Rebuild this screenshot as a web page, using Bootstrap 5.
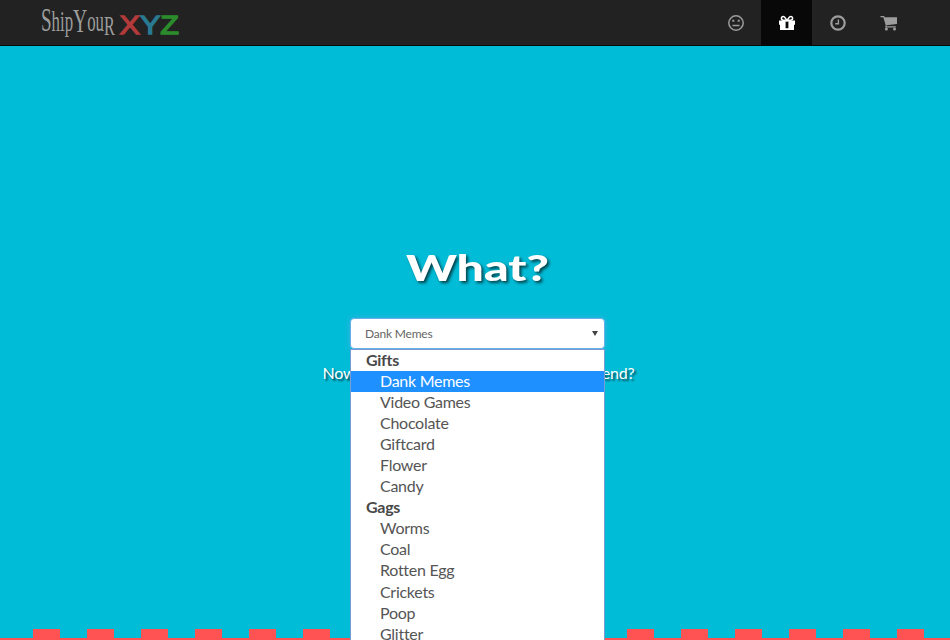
<!DOCTYPE html>
<html lang="en">
<head>
<meta charset="utf-8">
<meta name="viewport" content="width=device-width, initial-scale=1">
<title>ShipYour XYZ</title>
<link href="https://cdn.jsdelivr.net/npm/bootstrap@5.3.0/dist/css/bootstrap.min.css" rel="stylesheet">
<style>
body{font-family:"Lato","Open Sans",sans-serif;background:#00bcd7;color:#fff;height:640px}
.topbar{height:46px;background:#222;border-bottom:1px solid #080808;padding:0 36px 0 40px}
.topbar .nav-link{width:51px;height:45px;color:#9d9d9d;padding:0}
.topbar .nav-link.active{background:#080808;color:#fff}
.stage{height:594px;padding-top:194px}
.headline{height:60px;margin-left:5px}
.headline text{filter:drop-shadow(2px 2px 1.5px rgba(0,0,0,.65))}
.picker{width:255px;margin:18px 0 0 5px;height:31px}
.picker .form-select{height:31px;padding:0 14px;font-size:12px;letter-spacing:-.2px;line-height:29px;color:#666;border:1px solid #66afe9;border-radius:4px;background:#fff;box-shadow:0 0 6px rgba(102,175,233,.6);text-align:left}
.arrow{width:6px;height:5px;right:7px;top:13px}
.options{top:31px;left:0;width:255px;height:291px;overflow:hidden;background:#fff;border:1px solid #7a9cd3;border-bottom:0;color:#555;font-size:16px;letter-spacing:-.27px;line-height:19.4px;z-index:2}
.options div{height:21.05px;padding-left:29px;white-space:nowrap}
.options .group{padding-left:15px;font-weight:700;color:#484848}
.options .picked{background:#1e90ff;color:#fff}
.question{width:312px;margin:12px 0 0 7px;font-size:16px;letter-spacing:-.2px;line-height:24px;text-shadow:2px 2px 2px rgba(0,0,0,.6)}
.blocks{height:11px;padding-left:33.3px;border-bottom:2px solid #ff5252;background:linear-gradient(#ff5252,#ff5252);background:repeating-linear-gradient(90deg,#ff5252 0 26.7px,transparent 26.7px 54px) content-box content-box}
</style>
</head>
<body class="overflow-hidden">
<nav class="topbar d-flex justify-content-between">
  <a href="#" class="d-block" aria-label="ShipYour XYZ">
    <svg width="142" height="45" viewBox="0 0 142 45">
      <text transform="translate(1 31) scale(.62 1)" fill="#9d9d9d" font-family="Liberation Serif, serif" font-size="29" textLength="119" lengthAdjust="spacingAndGlyphs"><tspan font-size="33">S</tspan>hip<tspan font-size="34" dy="1">Y</tspan><tspan dy="-1">ou</tspan><tspan font-size="28" dy="4">R</tspan></text>
      <text x="79.500" y="33.500" font-family="Liberation Sans, sans-serif" font-size="26.500" stroke-width="1.300" textLength="59.500" lengthAdjust="spacingAndGlyphs"><tspan fill="#b23a3a" stroke="#b23a3a">X</tspan><tspan fill="#297a91" stroke="#297a91">Y</tspan><tspan fill="#2c8c2c" stroke="#2c8c2c">Z</tspan></text>
    </svg>
  </a>
  <div class="d-flex">
    <a href="#" class="nav-link d-flex align-items-center justify-content-center" aria-label="Who">
      <svg width="18" height="18" viewBox="0 0 18 18" fill="none" stroke="currentColor" stroke-width="1.500"><circle cx="9" cy="9" r="7.200"/><path d="M5.500 11.500h7"/><path d="M5.300 6.800h2M10.700 6.800h2" stroke-width="2"/></svg>
    </a>
    <a href="#" class="nav-link active d-flex align-items-center justify-content-center" aria-label="What">
      <svg width="18" height="18" viewBox="0 0 18 18" fill="currentColor"><path d="M1 6.500h16v4.200h-1V16H2v-5.300H1zM7.600 7.600v6.700h2.800V7.600z" fill-rule="evenodd"/><path d="M9 6.500C7.500 4 6.500 2.500 5.300 2.500c-2.500 0-2.500 3.700 0 3.700h7.400c2.500 0 2.500-3.700 0-3.700C11.500 2.500 10.500 4 9 6.500z" fill="none" stroke="currentColor" stroke-width="1.500"/></svg>
    </a>
    <a href="#" class="nav-link d-flex align-items-center justify-content-center" aria-label="When">
      <svg width="18" height="18" viewBox="0 0 18 18" fill="none" stroke="currentColor"><circle cx="9" cy="9" r="6.700" stroke-width="2.200"/><path d="M9.400 5.500v4.300H6.200" stroke-width="1.400"/></svg>
    </a>
    <a href="#" class="nav-link d-flex align-items-center justify-content-center" aria-label="Cart">
      <svg width="18" height="18" viewBox="0 0 18 18" fill="currentColor"><path d="M.500 2h3.700l.4 1.300H17v6.700L6.400 11.200l.2 1h9.200v1.200H5.200l.5-2.200L3.300 3.300H.500z"/><circle cx="6.400" cy="15" r="1.500"/><circle cx="14.500" cy="15" r="1.500"/></svg>
    </a>
  </div>
</nav>
<main class="stage d-flex flex-column align-items-center">
  <svg class="headline flex-shrink-0" width="160" height="60" viewBox="0 0 160 60">
    <text x="8" y="40.500" fill="#fff" font-family="Lato, sans-serif" font-weight="900" font-size="36" textLength="143" lengthAdjust="spacingAndGlyphs">What?</text>
  </svg>
  <div class="picker position-relative flex-shrink-0">
    <button type="button" class="form-select">Dank Memes</button>
    <svg class="arrow position-absolute" viewBox="0 0 6 5"><path d="M0 0h6L3 5z" fill="#444"/></svg>
    <div class="options position-absolute">
      <div class="group">Gifts</div>
      <div class="picked">Dank Memes</div>
      <div>Video Games</div>
      <div>Chocolate</div>
      <div>Giftcard</div>
      <div>Flower</div>
      <div>Candy</div>
      <div class="group">Gags</div>
      <div>Worms</div>
      <div>Coal</div>
      <div>Rotten Egg</div>
      <div>Crickets</div>
      <div>Poop</div>
      <div>Glitter</div>
    </div>
  </div>
  <div class="question d-flex justify-content-between flex-shrink-0"><span>Now</span><span>end?</span></div>
  <div class="blocks w-100 mt-auto flex-shrink-0"></div>
</main>
<script src="https://cdn.jsdelivr.net/npm/bootstrap@5.3.0/dist/js/bootstrap.bundle.min.js"></script>
</body>
</html>
